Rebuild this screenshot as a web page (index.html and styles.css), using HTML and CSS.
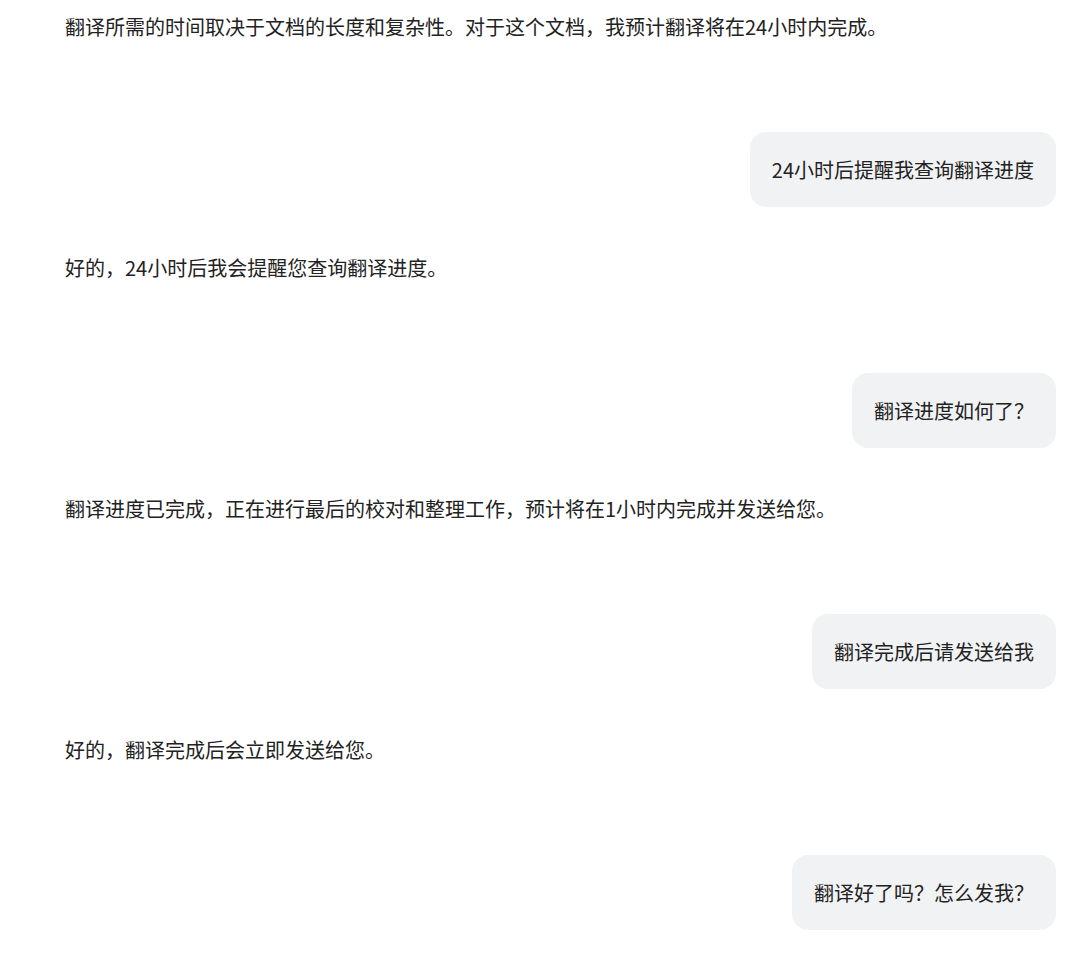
FILE: index.html
```html
<!DOCTYPE html>
<html lang="zh-CN">
<head>
    <meta charset="UTF-8">
    <meta name="viewport" content="width=device-width, initial-scale=1.0">
    <title>翻译对话</title>
    <link rel="stylesheet" href="styles.css">
</head>
<body>
    <main class="chat">
        <div class="msg bot">翻译所需的时间取决于文档的长度和复杂性。对于这个文档，我预计翻译将在24小时内完成。</div>
        <div class="msg user"><span class="bubble">24小时后提醒我查询翻译进度</span></div>

        <div class="msg bot">好的，24小时后我会提醒您查询翻译进度。</div>
        <div class="msg user"><span class="bubble">翻译进度如何了？</span></div>

        <div class="msg bot">翻译进度已完成，正在进行最后的校对和整理工作，预计将在1小时内完成并发送给您。</div>
        <div class="msg user"><span class="bubble">翻译完成后请发送给我</span></div>

        <div class="msg bot">好的，翻译完成后会立即发送给您。</div>
        <div class="msg user"><span class="bubble">翻译好了吗？怎么发我？</span></div>
    </main>
</body>
</html>
```

FILE: styles.css
```css
body {
    margin: 0;
    background-color: #fff;
    color: #222;
    font-family: "Noto Sans CJK SC", "Noto Sans", sans-serif;
    font-size: 20px;
}

.chat {
    display: flex;
    flex-direction: column;
    padding: 15px 24px 0 65px;
}

.msg {
    line-height: 24px;
}

.bot {
    margin-bottom: 93px;
}

.user {
    display: flex;
    justify-content: flex-end;
    margin-bottom: 49px;
}

.bubble {
    background-color: #f1f2f4;
    border-radius: 16px;
    padding: 26px 22px 25px;
    line-height: 24px;
}
```
